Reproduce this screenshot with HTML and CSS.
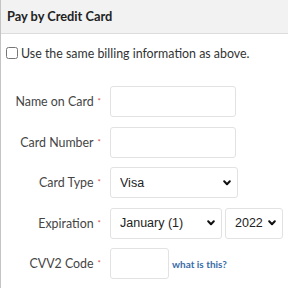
FILE: index.html
```html
<!DOCTYPE html>
<html lang="en">
<head>
    <meta charset="UTF-8">
    <title>Pay by Credit Card</title>
    <link rel="stylesheet" href="styles.css">
</head>
<body>
<div class="panel">
    <div class="panel-head">Pay by Credit Card</div>
    <div class="panel-body">
        <label class="same">
            <input type="checkbox">
            <span>Use the same billing information as above.</span>
        </label>
        <div class="row">
            <label class="lbl">Name on Card<span class="req">*</span></label>
            <input type="text" class="field">
        </div>
        <div class="row">
            <label class="lbl">Card Number<span class="req">*</span></label>
            <input type="text" class="field">
        </div>
        <div class="row">
            <label class="lbl">Card Type<span class="req">*</span></label>
            <select class="sel type">
                <option>Visa</option>
                <option>MasterCard</option>
            </select>
        </div>
        <div class="row">
            <label class="lbl">Expiration<span class="req">*</span></label>
            <select class="sel month">
                <option>January (1)</option>
            </select>
            <select class="sel year">
                <option>2022</option>
            </select>
        </div>
        <div class="row">
            <label class="lbl">CVV2 Code<span class="req">*</span></label>
            <input type="text" class="field cvv">
            <a href="#" class="help">what is this?</a>
        </div>
    </div>
</div>
</body>
</html>
```

FILE: styles.css
```css
* {
    margin: 0;
    padding: 0;
    box-sizing: border-box;
}

body {
    font-family: Lato, "Liberation Sans", sans-serif;
    color: #333;
    background: #fff;
}

.panel {
    width: 288px;
    height: 288px;
    border-left: 1px solid #c4c4c4;
}

.panel-head {
    height: 34px;
    padding: 0 0 0 6px;
    background: #f2f2f2;
    border-bottom: 1px solid #dcdcdc;
    font-size: 12.8px;
    font-weight: bold;
    line-height: 33px;
    color: #222;
}

.panel-body {
    padding: 12px 0 0 4px;
}

.same {
    display: flex;
    align-items: center;
    gap: 3px;
    font-size: 12.4px;
    height: 14px;
    margin-bottom: 26px;
}

.same input {
    width: 12px;
    height: 12px;
    margin: 0 0 0 1px;
}

.row {
    display: flex;
    align-items: center;
    height: 31px;
    margin-bottom: 9.5px;
}

.lbl {
    width: 105px;
    padding-right: 9px;
    text-align: right;
    font-size: 12.4px;
    color: #444;
}

.req {
    color: #d9534f;
    font-size: 8px;
    margin-left: 4px;
    vertical-align: 2px;
}

.field {
    width: 126px;
    height: 31px;
    border: 1px solid #e2e2e2;
    border-radius: 3px;
    background: #fff;
}

.field.cvv {
    width: 59px;
}

.sel {
    -webkit-appearance: none;
    appearance: none;
    height: 31px;
    border: 1px solid #e2e2e2;
    border-radius: 3px;
    background: #fff url("data:image/svg+xml,%3Csvg xmlns='http://www.w3.org/2000/svg' width='8' height='6' viewBox='0 0 8 6'%3E%3Cpath d='M1.2 1.3 L4 4.3 L6.8 1.3' fill='none' stroke='%23111' stroke-width='2' stroke-linecap='round' stroke-linejoin='round'/%3E%3C/svg%3E") no-repeat right 6px center;
    padding-left: 9px;
    font-family: "Liberation Sans", Arial, sans-serif;
    font-size: 12.5px;
    color: #222;
}

.sel.type {
    width: 128px;
}

.sel.month {
    width: 112px;
    margin-right: 3px;
}

.sel.year {
    width: 58px;
}

.help {
    margin-left: 3px;
    font-size: 10px;
    font-weight: bold;
    color: #3a6ca8;
    text-decoration: none;
}
```
